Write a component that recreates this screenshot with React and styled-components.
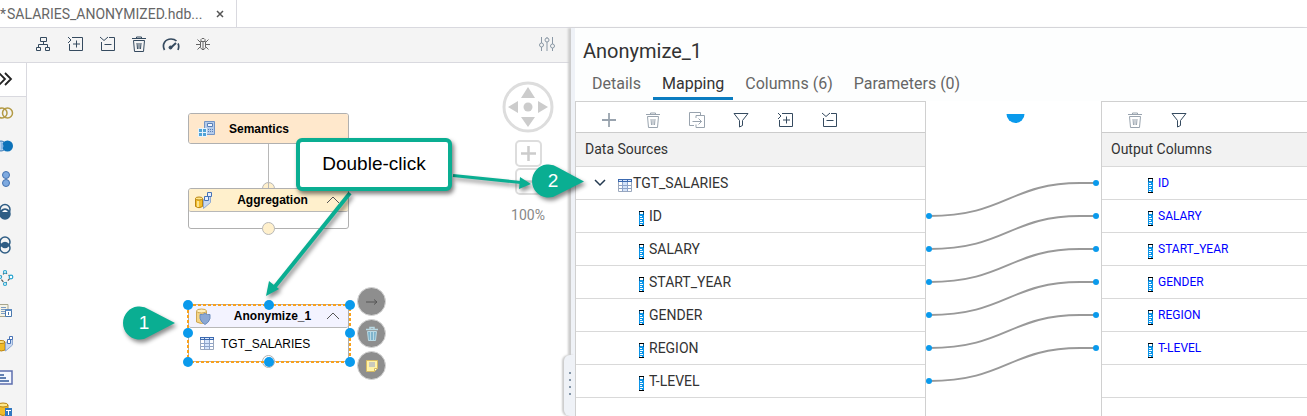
import React from "react";
import styled, { createGlobalStyle, css } from "styled-components";

const GlobalStyle = createGlobalStyle`
  *, *::before, *::after { box-sizing: border-box; }
  body {
    margin: 0;
    background: #fff;
    color: #333;
    font-family: Roboto, "Open Sans", sans-serif;
    font-size: 14px;
  }
  button { font: inherit; color: inherit; }
  svg { display: block; }
`;

/* ---------- shell ---------- */

const Shell = styled.div`
  position: relative;
  display: flex;
  flex-direction: column;
  height: 100vh;
  overflow: hidden;
`;

const FileTabs = styled.header`
  display: flex;
  flex: none;
  height: 28px;
  border-bottom: 1px solid #d9d9df;
`;

const FileTab = styled.div`
  display: flex;
  align-items: center;
  gap: 12px;
  padding-right: 10px;
  border-right: 1px solid #d9d9df;
  color: #666;
  white-space: nowrap;
`;

const FileName = styled.span`
  display: flex;
  gap: 1px;
`;

const IconButton = styled.button`
  display: flex;
  align-items: center;
  justify-content: center;
  flex: none;
  width: ${(p) => p.$width || 32}px;
  height: 100%;
  padding: 0;
  border: 0;
  background: none;
  color: ${(p) => p.$color || "#354a5f"};
  opacity: ${(p) => (p.disabled ? 0.5 : 1)};
`;

const Workspace = styled.main`
  display: grid;
  grid-template-columns: 571fr 736fr;
  flex: 1;
  min-height: 0;
`;

const Editor = styled.section`
  display: flex;
  flex-direction: column;
  min-width: 0;
  min-height: 0;
`;

const MainToolbar = styled.div`
  display: flex;
  flex: none;
  height: 35px;
  padding: 0 8px 2px 27px;
  background: #f4f4f4;
  border-bottom: 1px solid #d9d9df;
`;

const Spacer = styled.span`
  flex: 1;
`;

const EditorBody = styled.div`
  display: flex;
  flex: 1;
  min-height: 0;
`;

const Palette = styled.nav`
  display: flex;
  flex-direction: column;
  flex: none;
  width: 27px;
  overflow: hidden;
  background: #f4f4f4;
  border-right: 1px solid #d9d9df;
`;

const PaletteItem = styled.button`
  display: flex;
  align-items: center;
  flex: none;
  height: 33px;
  padding: 0 0 2px;
  border: 0;
  background: none;
`;

const PaletteToggle = styled(PaletteItem)`
  height: 34px;
  background: #fff;
  border-bottom: 1px solid #d9d9df;
`;

/* ---------- model canvas ---------- */

const Canvas = styled.div`
  position: relative;
  flex: 1;
  overflow: hidden;
  background: #fff;
`;

const Layer = styled.svg`
  position: absolute;
  inset: 0;
  width: 100%;
  height: 100%;
`;

const Node = styled.article`
  position: absolute;
  left: 161px;
  top: ${(p) => p.$top}px;
  width: 161px;
  background: #fff;
  border: 1px solid #b0b0b0;
  border-radius: 3px;
  color: #000;
  font-family: "Liberation Sans", Arial, sans-serif;
  font-size: 12px;
`;

const NodeHead = styled.div`
  display: grid;
  grid-template-columns: 24px 1fr 22px;
  align-items: center;
  height: ${(p) => p.$height || 23}px;
  padding-left: ${(p) => (p.$wide ? 9 : 6)}px;
  background: ${(p) => p.$bg};
  border-radius: 2px;
  font-weight: bold;
  ${(p) =>
    p.$divided &&
    css`
      border-bottom: 1px solid #b8b8b8;
    `}
`;

const NodeTitle = styled.span`
  padding-left: ${(p) => (p.$wide ? 7 : 0)}px;
  text-align: ${(p) => (p.$wide ? "left" : "center")};
`;

const NodeBody = styled.div`
  display: flex;
  align-items: center;
  gap: 7px;
  height: ${(p) => p.$height}px;
  padding: 0 0 2px 11px;
`;

const CanvasControls = styled.div`
  position: absolute;
  top: 18px;
  right: 17px;
  display: flex;
  flex-direction: column;
  align-items: center;
  color: #888;
`;

const ZoomButton = styled.button`
  width: 27px;
  height: 27px;
  margin-top: ${(p) => p.$gap}px;
  padding: 0;
  background: #fff;
  border: 2px solid #ddd;
  border-radius: 5px;
`;

const ZoomLevel = styled.output`
  margin-top: 12px;
  line-height: 16px;
`;

const NodeActions = styled.div`
  position: absolute;
  left: 330px;
  top: 224px;
  display: flex;
  flex-direction: column;
  gap: 3px;
`;

const RoundAction = styled.button`
  display: flex;
  align-items: center;
  justify-content: center;
  width: 29px;
  height: 29px;
  padding: 0;
  background: #8e8e8e;
  border: 1px solid #d6d6d6;
  border-radius: 50%;
`;

/* ---------- details panel ---------- */

const Details = styled.section`
  position: relative;
  display: flex;
  flex-direction: column;
  min-width: 0;
  padding-left: 4px;
  background: #fdfefe;
  box-shadow: inset 4px 0 #eff2f7, -3px 0 2px #ccc;
`;

const SplitGrip = styled.div`
  position: absolute;
  left: -7px;
  top: 327px;
  bottom: 0;
  display: flex;
  flex-direction: column;
  align-items: center;
  gap: 5px;
  width: 11px;
  padding-top: 17px;
  background: #eff2f7;
  border-radius: 6px 0 0 6px;
  box-shadow: -2px 0 2px #ccc;
`;

const GripDot = styled.i`
  width: 2px;
  height: 2px;
  background: #8496a8;
`;

const PanelTitle = styled.h1`
  margin: 11px 0 0 8px;
  font-size: 20px;
  font-weight: 400;
  line-height: 24px;
`;

const PanelTabs = styled.nav`
  display: flex;
  gap: 3px;
  height: 32px;
  margin: 6px 0 0 8px;
`;

const PanelTab = styled.a`
  height: 31px;
  padding: 0 9px;
  border-bottom: 3px solid ${(p) => (p.$active ? "#0a7cc0" : "transparent")};
  color: ${(p) => (p.$active ? "#333" : "#666")};
  font-size: 16px;
  line-height: 30px;
  text-decoration: none;
  white-space: nowrap;
`;

const Mapping = styled.div`
  display: grid;
  grid-template-columns: 351fr 175fr 206fr;
  flex: 1;
  background: #fff;
`;

const Pane = styled.div`
  min-width: 0;
  border: 1px solid #d0d0d0;
  border-width: 1px ${(p) => (p.$last ? 0 : 1)}px 0 1px;
`;

const PaneToolbar = styled.div`
  display: flex;
  height: 31px;
  padding: 6px 0 0 11px;
  border-bottom: 1px solid #ccc;
`;

const Grid = styled.table`
  width: 100%;
  border-spacing: 0;
`;

const HeadCell = styled.th`
  height: 34px;
  padding: 0 9px 2px;
  background: #f2f2f2;
  border-bottom: 1px solid #d9d9d9;
  font-weight: 400;
  text-align: left;
`;

const Cell = styled.td`
  height: 33px;
  padding: 0;
  border-bottom: 1px solid #d9d9d9;
`;

const CellContent = styled.div`
  display: flex;
  align-items: center;
  gap: ${(p) => p.$gap ?? 5}px;
  padding-left: ${(p) => p.$indent}px;
  color: ${(p) => (p.$output ? "#0000ff" : "#333")};
  font-size: ${(p) => (p.$output ? 12 : 14)}px;
  line-height: 16px;
`;

const LowIcon = styled.span`
  padding-top: 5px;
`;

const TreeToggle = styled.button`
  width: 24px;
  height: 24px;
  padding: 0;
  border: 0;
  background: none;
`;

const Wires = styled.div`
  position: relative;
`;

/* ---------- annotations ---------- */

const Annotations = styled.div`
  position: absolute;
  inset: 0;
  pointer-events: none;
  color: #000;
  font-family: "Liberation Sans", Arial, sans-serif;
`;

const ArrowLayer = styled(Layer)`
  filter: drop-shadow(2px 3px 2px rgba(0, 0, 0, 0.45));
`;

const Callout = styled.p`
  position: absolute;
  left: 296px;
  top: 138px;
  width: 156px;
  height: 53px;
  margin: 0;
  background: #fff;
  border: 4px solid #0aae92;
  border-radius: 6px;
  box-shadow: 2px 3px 4px rgba(0, 0, 0, 0.5);
  font-size: 19px;
  line-height: 44px;
  text-align: center;
`;

const StepNumber = styled.span`
  position: absolute;
  left: ${(p) => p.$x}px;
  top: ${(p) => p.$y}px;
  width: 20px;
  color: #fff;
  font-size: 19px;
  line-height: 20px;
  text-align: center;
`;

/* ---------- icons ---------- */

const Svg = ({ size = 16, children, ...rest }) => (
  <svg width={size} height={size} viewBox={`0 0 ${size} ${size}`} fill="none" stroke="currentColor" aria-hidden="true" {...rest}>
    {children}
  </svg>
);

const HierarchyIcon = () => (
  <Svg>
    <path d="M5.5 1.5h6v4h-6zM1.5 11.5h4v3h-4zM10.5 11.5h4v3h-4zM8.5 5.5v3M3.5 11.5v-3h9v3" />
  </Svg>
);
const ExpandIcon = () => (
  <Svg>
    <path d="M5 1.5h10.5v13h-13V8M1 1l3 3-3 3M9.5 4.5v7M6 8h7" />
  </Svg>
);
const CollapseIcon = () => (
  <Svg>
    <path d="M10 1.5h5.500v13h-13V6M1 1l4 3.500L9 1M5.500 8.500h7" />
  </Svg>
);
const TrashIcon = () => (
  <Svg>
    <path d="M1 2.5h14M5.5 2.5V1h5v1.5M2.5 4.5h11l-1 11h-9zM6 7l.5 6M8 7v6M10 7l-.5 6" />
  </Svg>
);
const GaugeIcon = () => (
  <Svg size={18}>
    <path d="M2.500 15C-.5 9 3.500 4 9 4c3 0 4.500 1 5.500 2M16 8.500c1 2 1 4 0 6.500" strokeWidth="1.700" />
    <path d="M8.500 13l5.500-5" strokeWidth="2" />
    <circle cx="8.500" cy="12.500" r="1.500" fill="currentColor" />
  </Svg>
);
const BugIcon = () => (
  <Svg size={14}>
    <path d="M4.5 4.5h5v6l-1.5 2H6l-1.500-2zM5 4V2.500L6 1.500h2l1 1V4M7 5v7M1.500 2.500l3 3M12.500 2.500l-3 3M0 7.500h4.500M9.500 7.500H14M1.500 12.500l3-3M12.500 12.500l-3-3" />
  </Svg>
);
const SlidersIcon = () => (
  <Svg>
    <path d="M2.5 1v6M2.5 11v4M8 1v1M8 6v9M13.5 1v7M13.5 12v3" />
    <circle cx="2.500" cy="9" r="2" />
    <circle cx="8" cy="4" r="2" />
    <circle cx="13.500" cy="10" r="2" />
  </Svg>
);
const PlusIcon = () => (
  <Svg>
    <path d="M8 1v14M1 8h14" strokeWidth="1.800" />
  </Svg>
);
const ExportIcon = () => (
  <Svg size={18}>
    <path d="M6 14.5H1.5v-13h11V4M8 4.5h8.5v12H8v-3M8 4.5V7M4.500 10.500h9M10.500 7.500l3 3-3 3" />
  </Svg>
);
const FilterIcon = () => (
  <Svg>
    <path d="M1 1.5h14L9.5 8.5v5l-3 1.5V8.5z" />
  </Svg>
);
const ChevronDown = () => (
  <Svg size={24} stroke="#233950" strokeWidth="1.500">
    <path d="M7 9l5 5 5-5" />
  </Svg>
);
const ChevronUp = () => (
  <Svg size={14} stroke="#555">
    <path d="M1 10l6-6 6 6" />
  </Svg>
);
const RulerIcon = () => (
  <svg width="5" height="15" viewBox="0 0 5 15" aria-hidden="true">
    <path fill="#0b94e8" d="M0 1h5v13H0z" />
    <path fill="#000" d="M0 0h5v1H0zM0 14h5v1H0z" />
    <path fill="#fff" d="M1 1h3v2H1zM1 5h2v1H1zM1 7h3v1H1zM1 9h2v1H1zM1 11h3v1H1zM1 13h2v1H1z" />
    <path fill="#075b8f" d="M0 1h1v3H0zM4 1h1v3H4z" />
  </svg>
);
const TableIcon = () => (
  <svg width="14" height="13" viewBox="0 0 14 13" aria-hidden="true">
    <path fill="#fff" stroke="#9ba8bd" d="M.5.5h13v12H.5z" />
    <path fill="#d4e4fb" d="M5 3h4v9H5z" />
    <path stroke="#8fa4c8" d="M4.5 3v10M9.5 3v10M1 6.5h12M1 9.5h12" />
    <path fill="#3c6ab0" d="M0 0h14v3H0z" />
    <path fill="#dbe8fc" d="M1 1h3v1H1zM5 1h4v1H5zM10 1h3v1h-3z" />
  </svg>
);
const SemanticsIcon = () => (
  <svg width="18" height="18" viewBox="0 0 18 18" aria-hidden="true">
    <path fill="#b4cbea" stroke="#7394c5" d="M6.5 1.5h10v13h-10z" />
    <path fill="#f2f7ff" stroke="#5a7fb6" d="M9.5 3.5h5v3h-5z" />
    <path stroke="#5a7fb6" d="M10 9.5h5M10 11.5h5" strokeDasharray="1 1" />
    <path fill="#e8f2fb" d="M0 8h9v9H0z" />
    <path fill="#4fa3d6" d="M1 9h3v3H1zM5 9h3v3H5zM1 13h3v3H1zM5 13h3v3H5z" />
  </svg>
);
const CubeStackIcon = () => (
  <svg width="17" height="17" viewBox="0 0 17 17" aria-hidden="true">
    <path fill="#f2bd2c" stroke="#b98412" d="M.5 6.5v8q3.5 2.500 7 0v-8" />
    <ellipse cx="4" cy="6.500" rx="3.500" ry="1.500" fill="#ffe78a" stroke="#b98412" />
    <path stroke="#fff0ae" strokeWidth="1.500" d="M3 9v6" />
    <path fill="#c9d9f1" stroke="#8fa9d2" d="M8.5 7.5l7-6v9l-7 6z" />
    <path fill="#e7f0ff" stroke="#4873b6" d="M9.5 4.5h4v4h-4zM12.500.5h4v4h-4z" />
  </svg>
);
const ShieldDbIcon = () => (
  <svg width="16" height="17" viewBox="0 0 16 17" aria-hidden="true">
    <path fill="#f6d586" stroke="#cda652" d="M1.500 3v11q5 3 10 0V3" />
    <ellipse cx="6.500" cy="3" rx="5" ry="2" fill="#fff0be" stroke="#cda652" />
    <path fill="#8ba8d4" stroke="#6d8dbd" d="M10 5.500q2.500 1.500 5 1v4q-1 4-5 6-4-2-5-6v-4q2.500.5 5-1z" />
  </svg>
);

const paletteIcons = [
  ["Join", <g key="a" fill="none" stroke="#b39a45" strokeWidth="1.500"><circle cx="2" cy="9" r="5" /><circle cx="7.500" cy="9" r="5" /></g>],
  ["Non equi join", <g key="a"><circle cx="1" cy="9" r="5" fill="#b8d3ef" stroke="#3577b5" /><circle cx="7.500" cy="9" r="5.500" fill="#0d72b9" /><path d="M1 5q5 4 0 8" fill="#8db8e3" /></g>],
  ["Union", <g key="a" fill="#7eaae0" stroke="#4472b0"><circle cx="6" cy="5" r="3.500" /><circle cx="6" cy="13" r="3.500" /></g>],
  ["Minus", <g key="a" stroke="#2f5d84" strokeWidth="1.500" fill="none"><circle cx="5" cy="6.500" r="5" /><circle cx="5" cy="11" r="5" fill="#2f5d84" /><path d="M2 9q3-4 6 0z" fill="#fff" stroke="none" /></g>],
  ["Intersect", <g key="a" stroke="#2f5d84" strokeWidth="1.500" fill="none"><circle cx="5" cy="6" r="5" /><circle cx="5" cy="12" r="5" /><path d="M1 9q4-5 8 0-4 5-8 0z" fill="#2f5d84" /></g>],
  ["Graph", <g key="a" fill="#fff" stroke="#28a4cf" strokeWidth="1.200"><path d="M5 3L0 9l5 6 6-7z" strokeDasharray="3 2" fill="none" stroke="#555" /><circle cx="5" cy="3" r="1.500" /><circle cx="11" cy="8" r="1.800" /><circle cx="5" cy="15" r="1.500" /><circle cx="0" cy="8" r="1.500" /></g>],
  ["Table function", <g key="a"><path d="M-2 2.500h10v12H-2z" fill="#f5f3e5" stroke="#a8a68e" /><path d="M1 5.500h5M1 7.500h5M1 9.500h5M1 11.500h5" stroke="#7c9bc2" /><path d="M5.500 7.500h6v7h-6z" fill="#fff" stroke="#4a78ad" /><path d="M5 7h7v2H5z" fill="#5b8ac0" /><path d="M8.500 10v3" stroke="#4a78ad" /></g>],
  ["Aggregation", <g key="a"><path d="M-2 7v8q3 2 7 0V7z" fill="#f1bb28" stroke="#b98412" /><ellipse cx="1" cy="7" rx="4" ry="1.500" fill="#ffe78a" stroke="#b98412" /><path d="M5.500 8l7-6v8l-7 6z" fill="#c9d9f1" stroke="#8fa9d2" /><path d="M7.500 4.500h3v4h-3zM9.500 1.500h3v3h-3z" fill="#fff" stroke="#4873b6" /></g>],
  ["Rank", <g key="a"><path d="M-2 3h14v13H-2z" fill="#f4f7ff" stroke="#5d6fae" strokeWidth="1.500" /><path d="M0 7h4M0 10h6M0 13h9" stroke="#31599b" strokeWidth="1.500" /></g>],
  ["Table", <g key="a"><path d="M-2 4v9q5 3 10 0V4z" fill="#f1bb28" stroke="#b98412" /><ellipse cx="3" cy="4" rx="5" ry="2" fill="#ffe78a" stroke="#b98412" /><path d="M5 7h7v9H5z" fill="#3278c0" /><path d="M6 9.500h5M8.500 9v5" stroke="#fff" /></g>],
];

/* ---------- data ---------- */

const sourceColumns = ["ID", "SALARY", "START_YEAR", "GENDER", "REGION", "T-LEVEL"];
const ROW = 33;
const FIRST_ROW_CENTER = 82;

function Wire({ index }) {
  const to = FIRST_ROW_CENTER + index * ROW;
  return (
    <>
      <svg x="0" y={to - 2} width="100%" height="37" viewBox="0 0 175 37" preserveAspectRatio="none">
        <path d="M3 35C80 35 84 2 154 2H170" fill="none" stroke="#999" strokeWidth="2" vectorEffect="non-scaling-stroke" />
      </svg>
      <circle cx="3" cy={to + ROW} r="3" fill="#0a9aec" />
      <svg x="100%" overflow="visible">
        <circle cx="-5" cy={to} r="3" fill="#0a9aec" />
      </svg>
    </>
  );
}

const handles = [161, 242, 323]
  .flatMap((x) => [242, 270, 299].map((y) => [x, y]))
  .filter(([x, y]) => !(x === 242 && y === 270));

function ModelCanvas() {
  return (
    <Canvas>
      <Layer aria-hidden="true" fill="#fff0cc" stroke="#b8b8b8">
        <circle cx="241.500" cy="125.500" r="6" />
        <path d="M241.500 80v46" />
      </Layer>
      <Node $top={50}>
        <NodeHead $bg="#ffe8cc" $height={29} $wide>
          <span><SemanticsIcon /></span>
          <NodeTitle $wide>Semantics</NodeTitle>
        </NodeHead>
      </Node>
      <Node $top={125}>
        <NodeHead $bg="#fff0cc" $divided>
          <span><CubeStackIcon /></span>
          <NodeTitle>Aggregation</NodeTitle>
          <span><ChevronUp /></span>
        </NodeHead>
        <NodeBody $height={16} />
      </Node>
      <Node $top={241}>
        <NodeHead $bg="#f3f3ff" $divided>
          <span><ShieldDbIcon /></span>
          <NodeTitle>Anonymize_1</NodeTitle>
          <span><ChevronUp /></span>
        </NodeHead>
        <NodeBody $height={33}>
          <TableIcon />
          TGT_SALARIES
        </NodeBody>
      </Node>
      <Layer aria-hidden="true">
        <circle cx="241.500" cy="165.500" r="6" fill="#fff0cc" stroke="#b8b8b8" />
        <circle cx="241.500" cy="298.500" r="6" fill="#fff" stroke="#b0b0b0" />
        <path d="M161 242h162v57H161z" fill="none" stroke="#f9a11b" strokeWidth="2" strokeDasharray="3 2" />
        {handles.map(([x, y]) => (
          <circle key={`${x}-${y}`} cx={x} cy={y} r="5" fill="#0a9aec" />
        ))}
      </Layer>
      <NodeActions>
        <RoundAction aria-label="Connect">
          <Svg stroke="#555"><path d="M2 8h11M10 5.500l3 2.500-3 2.500" /></Svg>
        </RoundAction>
        <RoundAction aria-label="Delete node">
          <Svg stroke="#b9d9e4"><path d="M2 3.500h12M6 3V1.500h4V3" strokeWidth="1.500" /><path d="M3.500 5.500h9l-1 9h-7zM6.500 6v8M9.500 6v8" fill="#7fb4cc" /></Svg>
        </RoundAction>
        <RoundAction aria-label="Add note">
          <Svg stroke="#d7bb62"><path d="M2.500 2.500h11v8l-3 3h-8z" fill="#fff3a8" /><path d="M5 4h6v5H5z" fill="#c9c9bd" stroke="none" /><path d="M13 10.500h-2.500V13" fill="#fff" /></Svg>
        </RoundAction>
      </NodeActions>
      <CanvasControls>
        <svg width="52" height="52" viewBox="0 0 52 52" aria-hidden="true">
          <circle cx="26" cy="26" r="24" fill="#fff" stroke="#ddd" strokeWidth="3" />
          <circle cx="26" cy="26" r="4.500" fill="#ccc" />
          <path fill="#ccc" d="M26 6l7 11H19zM26 46l7-10H19zM6 26l10-6v12zM46 26l-10-6v12z" />
        </svg>
        <ZoomButton $gap={7} aria-label="Zoom in">
          <Svg size={23} stroke="#ccc" strokeWidth="2.500"><path d="M11.500 4v15M4 11.500h15" /></Svg>
        </ZoomButton>
        <ZoomButton $gap={1} aria-label="Zoom out">
          <Svg size={23} stroke="#ccc" strokeWidth="2.500"><path d="M4 11.500h15" /></Svg>
        </ZoomButton>
        <ZoomLevel>100%</ZoomLevel>
      </CanvasControls>
    </Canvas>
  );
}

function MappingView() {
  return (
    <Mapping>
      <Pane>
        <PaneToolbar>
          <IconButton $width={44} disabled aria-label="Add"><PlusIcon /></IconButton>
          <IconButton $width={44} disabled aria-label="Delete"><TrashIcon /></IconButton>
          <IconButton $width={44} disabled aria-label="Replace"><ExportIcon /></IconButton>
          <IconButton $width={44} aria-label="Filter"><FilterIcon /></IconButton>
          <IconButton $width={44} aria-label="Expand all"><ExpandIcon /></IconButton>
          <IconButton $width={44} aria-label="Collapse all"><CollapseIcon /></IconButton>
        </PaneToolbar>
        <Grid>
          <thead><tr><HeadCell scope="col">Data Sources</HeadCell></tr></thead>
          <tbody>
            <tr>
              <Cell>
                <CellContent $indent={12} $gap={2}>
                  <TreeToggle aria-label="Collapse TGT_SALARIES"><ChevronDown /></TreeToggle>
                  <CellContent $indent={4} $gap={1}>
                    <LowIcon><TableIcon /></LowIcon>
                    TGT_SALARIES
                  </CellContent>
                </CellContent>
              </Cell>
            </tr>
            {sourceColumns.map((name) => (
              <tr key={name}>
                <Cell>
                  <CellContent $indent={63}>
                    <LowIcon><RulerIcon /></LowIcon>
                    {name}
                  </CellContent>
                </Cell>
              </tr>
            ))}
          </tbody>
        </Grid>
      </Pane>
      <Wires>
        <Layer aria-hidden="true">
          <svg x="50%" overflow="visible">
            <path d="M-7 13h18a9 9 0 0 1-18 0z" fill="#0a9aec" />
          </svg>
          {sourceColumns.map((name, i) => (
            <Wire key={name} index={i} />
          ))}
        </Layer>
      </Wires>
      <Pane $last>
        <PaneToolbar>
          <IconButton $width={44} disabled aria-label="Delete output column"><TrashIcon /></IconButton>
          <IconButton $width={44} aria-label="Filter output columns"><FilterIcon /></IconButton>
        </PaneToolbar>
        <Grid>
          <thead><tr><HeadCell scope="col">Output Columns</HeadCell></tr></thead>
          <tbody>
            {sourceColumns.map((name) => (
              <tr key={name}>
                <Cell>
                  <CellContent $indent={46} $output>
                    <LowIcon><RulerIcon /></LowIcon>
                    {name}
                  </CellContent>
                </Cell>
              </tr>
            ))}
            <tr><Cell /></tr>
          </tbody>
        </Grid>
      </Pane>
    </Mapping>
  );
}

export default function App() {
  return (
    <>
      <GlobalStyle />
      <Shell>
        <FileTabs>
          <FileTab>
            <FileName><span>*</span><span>SALARIES_ANONYMIZED.hdb...</span></FileName>
            <IconButton $width={12} $color="#555" aria-label="Close tab">
              <Svg size={8} strokeWidth="1.500"><path d="M1 1l6 6M7 1L1 7" /></Svg>
            </IconButton>
          </FileTab>
        </FileTabs>
        <Workspace>
          <Editor>
            <MainToolbar>
              <IconButton aria-label="Auto layout"><HierarchyIcon /></IconButton>
              <IconButton aria-label="Expand all nodes"><ExpandIcon /></IconButton>
              <IconButton aria-label="Collapse all nodes"><CollapseIcon /></IconButton>
              <IconButton aria-label="Delete selection"><TrashIcon /></IconButton>
              <IconButton aria-label="Performance analysis"><GaugeIcon /></IconButton>
              <IconButton $color="#666" aria-label="Debug"><BugIcon /></IconButton>
              <Spacer />
              <IconButton $color="#8a98a5" aria-label="Settings"><SlidersIcon /></IconButton>
            </MainToolbar>
            <EditorBody>
              <Palette aria-label="Node palette">
                <PaletteToggle aria-label="Expand palette">
                  <Svg stroke="#222" strokeWidth="1.800"><path d="M-1 2l6 6-6 6M5 2l6 6-6 6" /></Svg>
                </PaletteToggle>
                {paletteIcons.map(([label, drawing]) => (
                  <PaletteItem key={label} aria-label={label}>
                    <svg width="18" height="18" viewBox="0 0 18 18" aria-hidden="true">{drawing}</svg>
                  </PaletteItem>
                ))}
              </Palette>
              <ModelCanvas />
            </EditorBody>
          </Editor>
          <Details>
            <SplitGrip><GripDot /><GripDot /><GripDot /><GripDot /></SplitGrip>
            <PanelTitle>Anonymize_1</PanelTitle>
            <PanelTabs>
              <PanelTab href="#details">Details</PanelTab>
              <PanelTab href="#mapping" $active>Mapping</PanelTab>
              <PanelTab href="#columns">Columns (6)</PanelTab>
              <PanelTab href="#parameters">Parameters (0)</PanelTab>
            </PanelTabs>
            <MappingView />
          </Details>
        </Workspace>
        <Annotations>
          <ArrowLayer aria-hidden="true" fill="#0aae92">
            <path d="M350 193L273 289" stroke="#0aae92" strokeWidth="4" />
            <path d="M266 296l3-15 10 8z" />
            <path d="M453 175.500l68 7" stroke="#0aae92" strokeWidth="3" />
            <path d="M531 184l-12 5 1-12z" />
            <path d="M175 323l-26 13.500a16.500 16.500 0 1 1 0-27z" />
            <path d="M584 181.500l-26 13a16.500 16.500 0 1 1 0-27z" />
          </ArrowLayer>
          <Callout>Double-click</Callout>
          <StepNumber $x={134} $y={313}>1</StepNumber>
          <StepNumber $x={543} $y={171}>2</StepNumber>
        </Annotations>
      </Shell>
    </>
  );
}
